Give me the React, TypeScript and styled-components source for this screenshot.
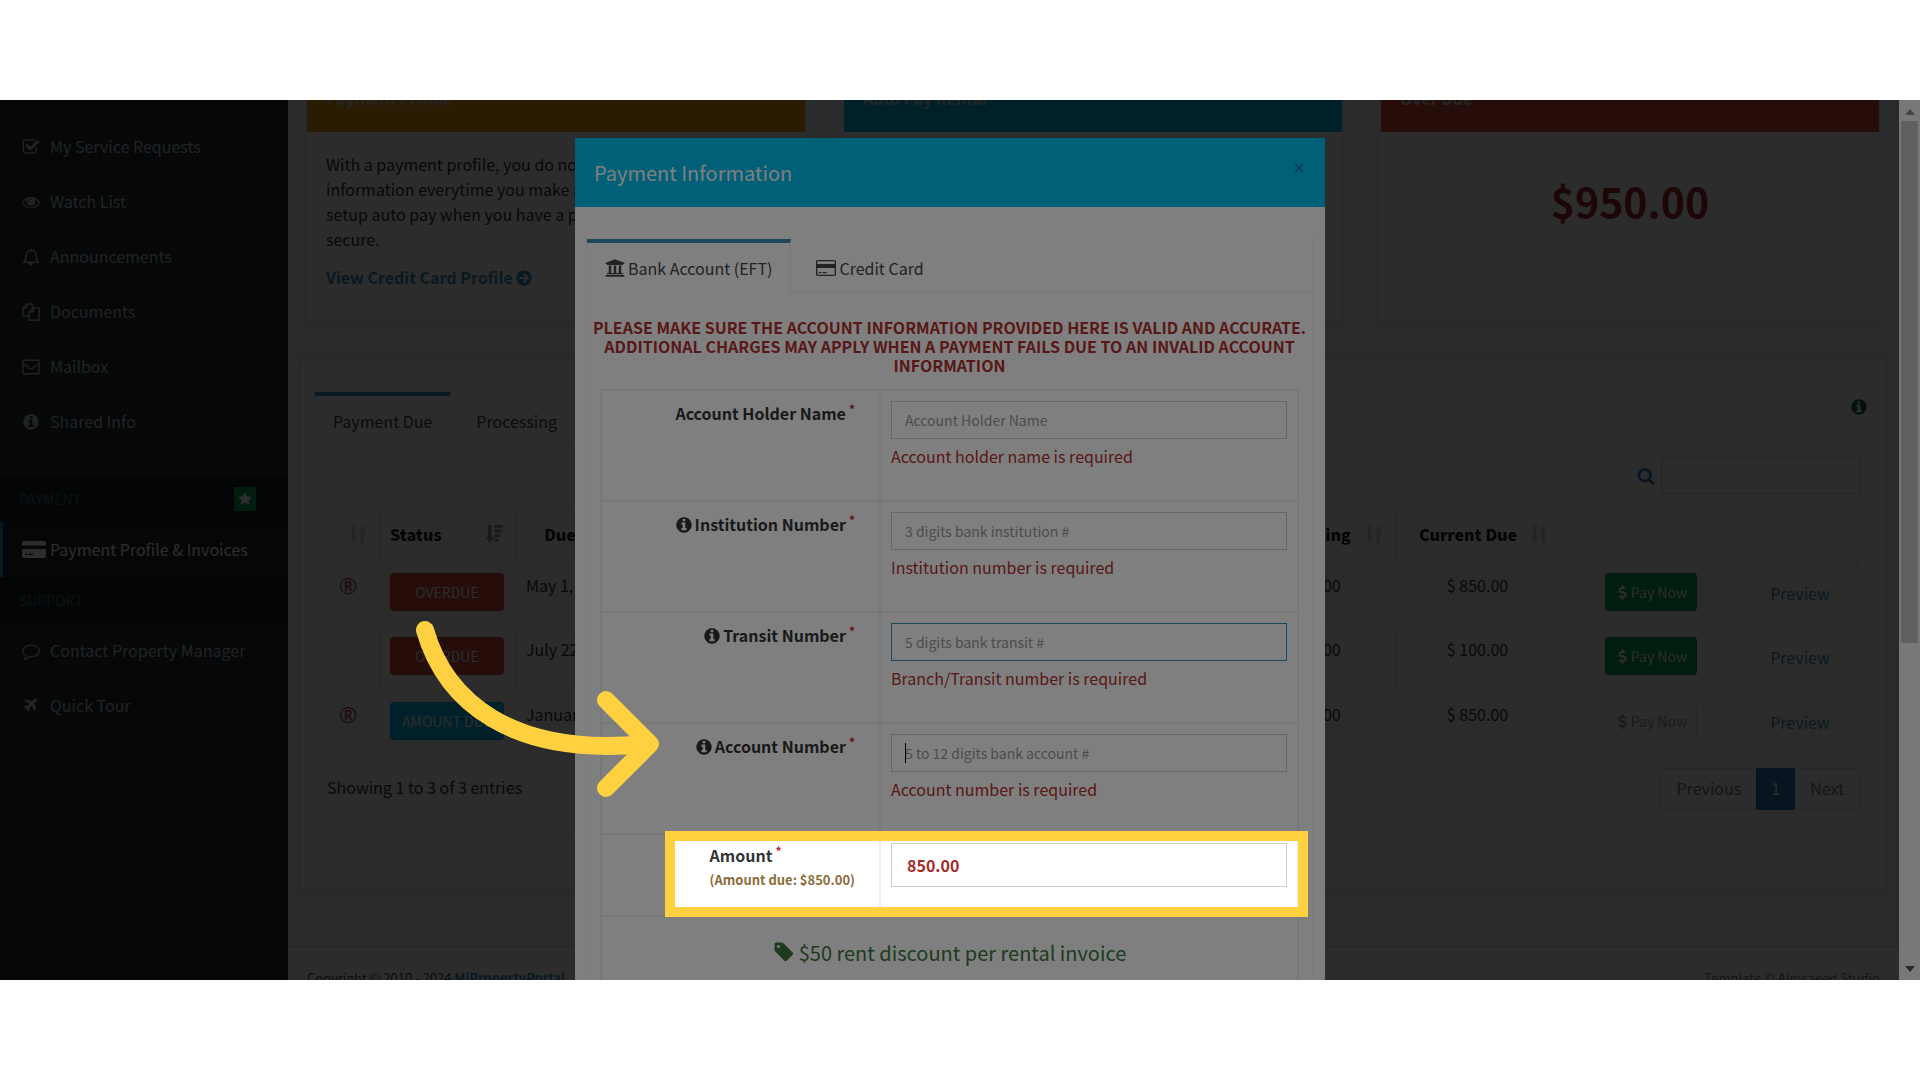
import React from "react";
import styled, { createGlobalStyle, css } from "styled-components";
import { FaArrowCircleRight, FaUniversity, FaDollarSign } from "react-icons/fa";

const GlobalStyle = createGlobalStyle`
  *, *::before, *::after { box-sizing: border-box; }
  body {
    margin: 0;
    background: #fff;
    color: #333;
    font-family: "Noto Sans CJK SC", "Source Sans Pro", "Noto Sans", sans-serif;
    font-size: 16px;
    line-height: 25px;
  }
  button, input { font: inherit; color: inherit; }
  a { color: #3c8dbc; text-decoration: none; }
  ul { list-style: none; margin: 0; padding: 0; }
  p, h1, h2, h3 { margin: 0; }
`;

/* ---------- icons ---------- */

const Glyph = styled.svg<{ $size?: number }>`
  width: ${(p) => p.$size ?? 18}px;
  height: ${(p) => p.$size ?? 18}px;
  flex: none;
  fill: currentColor;
`;

const paths = {
  check:
    "M1472 930v318q0 119-84.5 203.5t-203.5 84.5h-832q-119 0-203.5-84.5t-84.5-203.5v-832q0-119 84.5-203.5t203.5-84.5h832q63 0 117 25 15 7 18 23 3 17-9 29l-49 49q-10 10-23 10-3 0-9-2-23-6-45-6h-832q-66 0-113 47t-47 113v832q0 66 47 113t113 47h832q66 0 113-47t47-113v-254q0-13 9-22l64-64q10-10 23-10 6 0 12 3 20 8 20 29zm231-489l-814 814q-24 24-57 24t-57-24l-430-430q-24-24-24-57t24-57l110-110q24-24 57-24t57 24l263 263 647-647q24-24 57-24t57 24l110 110q24 24 24 57t-24 57z",
  eye: "M1664 960q-152-236-381-353 61 104 61 225 0 185-131.5 316.5t-316.5 131.5-316.5-131.5-131.5-316.5q0-121 61-225-229 117-381 353 133 205 333.5 326.5t434.5 121.5 434.5-121.5 333.5-326.5zm-720-384q0-20-14-34t-34-14q-125 0-214.5 89.5t-89.5 214.5q0 20 14 34t34 14 34-14 14-34q0-86 61-147t147-61q20 0 34-14t14-34zm848 384q0 34-20 69-140 230-376.5 368.5t-499.5 138.5-499.5-139-376.5-368q-20-35-20-69t20-69q140-229 376.5-368t499.5-139 499.5 139 376.5 368q20 35 20 69z",
  info: "M1152 1376v-160q0-14-9-23t-23-9h-96v-512q0-14-9-23t-23-9h-320q-14 0-23 9t-9 23v160q0 14 9 23t23 9h96v320h-96q-14 0-23 9t-9 23v160q0 14 9 23t23 9h448q14 0 23-9t9-23zm-128-896v-160q0-14-9-23t-23-9h-192q-14 0-23 9t-9 23v160q0 14 9 23t23 9h192q14 0 23-9t9-23zm640 416q0 209-103 385.5t-279.5 279.5-385.5 103-385.5-103-279.5-279.5-103-385.5 103-385.5 279.5-279.5 385.5-103 385.5 103 279.5 279.5 103 385.5z",
  star: "M1728 647q0 22-26 48l-363 354 86 500q1 7 1 20 0 21-10.5 35.5t-30.5 14.5q-19 0-40-12l-449-236-449 236q-22 12-40 12-21 0-31.5-14.5t-10.5-35.5q0-6 2-20l86-500-364-354q-25-27-25-48 0-37 56-46l502-73 225-455q19-41 49-41t49 41l225 455 502 73q56 9 56 46z",
  search:
    "M1216 832q0-185-131.5-316.5t-316.5-131.5-316.5 131.5-131.5 316.5 131.5 316.5 316.5 131.5 316.5-131.5 131.5-316.5zm512 832q0 52-38 90t-90 38q-54 0-90-38l-343-342q-179 124-399 124-143 0-273.5-55.5t-225-150-150-225-55.5-273.5 55.5-273.5 150-225 225-150 273.5-55.5 273.5 55.5 225 150 150 225 55.5 273.5q0 220-124 399l343 343q37 37 37 90z",
  tag: "M576 448q0-53-37.5-90.5t-90.5-37.5-90.5 37.5-37.5 90.5 37.5 90.5 90.5 37.5 90.5-37.5 37.5-90.5zm1067 576q0 53-37 90l-491 492q-39 37-91 37-53 0-90-37l-715-716q-38-37-64.5-101t-26.5-117v-416q0-52 38-90t90-38h416q53 0 117 26.5t102 64.5l715 714q37 39 37 91z",
  plane:
    "M1568 160q44 52 12 148t-108 172l-161 161 160 696q5 19-12 33l-128 96q-7 6-19 6-4 0-7-1-15-3-21-16l-279-508-259 259 53 194q5 17-8 31l-96 96q-9 9-23 9h-2q-15-2-24-13l-189-252-252-189q-11-7-13-23-1-13 9-25l96-97q9-9 23-9 6 0 8 1l194 53 259-259-508-279q-14-8-17-24-2-16 9-27l128-128q14-13 30-8l665 159 160-160q76-76 172-108t148 12z",
  comment:
    "M896 384q-204 0-381.5 69.5t-282 187.5-104.5 255q0 112 71.5 213.5t201.5 175.5l87 50-27 96q-24 91-70 172 152-63 275-171l43-38 57 6q69 8 130 8 204 0 381.5-69.5t282-187.5 104.5-255-104.5-255-282-187.5-381.5-69.5zm896 512q0 174-120 321.5t-326 233-450 85.5q-70 0-145-8-198 175-460 242-49 14-114 22h-5q-15 0-27-10.5t-16-27.5v-1q-3-4-.5-12t2-10 4.5-9.5l6-9 7-8.5 8-9q7-8 31-34.5t34.5-38 31-39.5 32.5-51 27-59 26-76q-157-89-247.5-220t-90.5-281q0-174 120-321.5t326-233 450-85.5 450 85.5 326 233 120 321.5z",
};

type SolidName = keyof typeof paths;

const Solid = ({ name, size }: { name: SolidName; size?: number }) => (
  <Glyph $size={size} viewBox="0 0 1792 1792" aria-hidden="true">
    <path d={paths[name]} />
  </Glyph>
);

const LineGlyph = styled(Glyph)`
  fill: none;
  stroke: currentColor;
  stroke-width: 1.4;
  stroke-linejoin: round;
`;

const BellIcon = () => (
  <LineGlyph viewBox="0 0 18 18" aria-hidden="true">
    <path d="M9 1v1.5M1.5 14.2c1.8-1.6 2.6-3.4 2.6-7.2 0-2.600 2.200-4.500 4.900-4.500s4.900 1.900 4.900 4.500c0 3.800.8 5.600 2.600 7.200z" />
    <path d="M7.300 15.100c0 1 .8 1.700 1.700 1.700s1.700-.7 1.700-1.700z" fill="currentColor" />
  </LineGlyph>
);

const FilesIcon = () => (
  <LineGlyph viewBox="0 0 18 18" aria-hidden="true">
    <path d="M7 13H.8V5.200L5 1h5.200v3.600M5 1v4.200H.8" />
    <path d="M7.200 8.800l4.200-4.200h5.800v12.600h-10zM11.400 4.600v4.200H7.200" />
  </LineGlyph>
);

const EnvelopeIcon = () => (
  <LineGlyph viewBox="0 0 18 18" aria-hidden="true">
    <rect x="0.8" y="2.300" width="16.400" height="13.400" rx="1.200" />
    <path d="M1 5.200l6.400 5.100q1.600 1.200 3.200 0L17 5.200" />
  </LineGlyph>
);

const WideGlyph = styled.svg`
  width: 24px;
  height: 17px;
  flex: none;
  fill: currentColor;
`;

const SolidCardIcon = () => (
  <WideGlyph viewBox="0 0 24 17" aria-hidden="true">
    <path d="M1.500 0h21Q24 0 24 1.500V4.500H0V1.500Q0 0 1.500 0z" />
    <path
      fillRule="evenodd"
      d="M0 8h24v7.500q0 1.500-1.500 1.500h-21Q0 17 0 15.500zM3 12.500v1.400h2.500v-1.400zM7 12.500v1.400h4v-1.400z"
    />
  </WideGlyph>
);

const OutlineCardIcon = () => (
  <Glyph $size={20} viewBox="0 0 1920 1792" aria-hidden="true">
    <path d="M1760 128q66 0 113 47t47 113v1216q0 66-47 113t-113 47h-1600q-66 0-113-47t-47-113v-1216q0-66 47-113t113-47h1600zm-1600 128q-13 0-22.500 9.500t-9.500 22.500v224h1664v-224q0-13-9.500-22.500t-22.500-9.500h-1600zm1600 1280q13 0 22.500-9.500t9.500-22.500v-608h-1664v608q0 13 9.500 22.500t22.500 9.500h1600zm-1504-128v-128h256v128h-256zm384 0v-128h384v128h-384z" />
  </Glyph>
);

const SortIcon = () => (
  <Glyph viewBox="0 0 18 18" aria-hidden="true">
    <path d="M3 0h3.500v12H9l-4.200 6L.5 12H3zM11.500 18H15V6h2.500L13.300 0 9 6h2.500z" />
  </Glyph>
);

const SortDescIcon = () => (
  <Glyph viewBox="0 0 18 18" aria-hidden="true">
    <path d="M3 0h3.500v12H9l-4.200 6L.5 12H3zM9.500 0H18v3H9.500zM9.500 4.500h7v3h-7zM9.500 9H15v3H9.500zM9.500 13.500h4v3h-4z" />
  </Glyph>
);

/* ---------- page frame ---------- */

const Page = styled.div`
  height: 100vh;
  padding: 100px 0;
  background: #fff;
`;

const Screen = styled.div`
  position: relative;
  display: flex;
  height: 100%;
  overflow: hidden;
`;

/* ---------- sidebar ---------- */

const Sidebar = styled.nav`
  width: 288px;
  flex: none;
  padding-top: 19px;
  background: #222d32;
`;

const NavLink = styled.a<{ $active?: boolean }>`
  display: flex;
  align-items: center;
  height: 55px;
  padding-left: 19px;
  border-left: 3px solid transparent;
  color: #b8c7ce;
  white-space: nowrap;
  ${(p) =>
    p.$active &&
    css`
      background: #1e282c;
      border-left-color: #3c8dbc;
      color: #fff;
    `}
`;

const NavIcon = styled.span`
  display: flex;
  width: 28px;
  flex: none;
`;

const NavHeading = styled.h2<{ $spaced?: boolean }>`
  display: flex;
  align-items: center;
  justify-content: space-between;
  height: 46px;
  margin-top: ${(p) => (p.$spaced ? 27 : 0)}px;
  padding: 0 32px 0 19px;
  background: #1a2226;
  color: #4b646f;
  font-size: 14px;
  font-weight: 400;
`;

const Badge = styled.span`
  display: flex;
  align-items: center;
  justify-content: center;
  width: 22px;
  height: 24px;
  background: #00a65a;
  color: #fff;
`;

/* ---------- content ---------- */

const Content = styled.div`
  flex: 1;
  min-width: 0;
  display: flex;
  flex-direction: column;
  background: #ecf0f5;
`;

/* The dashboard is scrolled a little, so the card headings start above the frame. */
const CardRow = styled.section`
  display: grid;
  grid-template-columns: repeat(3, 1fr);
  gap: 39px;
  margin-top: -16px;
  padding: 0 20px 0 19px;
`;

const Card = styled.article`
  display: flex;
  flex-direction: column;
  height: 237px;
  background: #fff;
  border-radius: 4px;
  box-shadow: 0 1px 1px rgba(0, 0, 0, 0.1);
`;

const CardHead = styled.h2<{ $color: string }>`
  height: 48px;
  padding: 2px 0 0 19px;
  background: ${(p) => p.$color};
  color: #d2d6de;
  font-size: 16px;
  font-weight: 700;
`;

const CardBody = styled.div`
  display: flex;
  flex-direction: column;
  align-items: flex-start;
  gap: 13px;
  padding: 20px 19px;
`;

const ProfileLink = styled.a`
  display: flex;
  align-items: center;
  gap: 3px;
  font-weight: 700;
`;

const Total = styled.strong`
  padding-top: 38px;
  color: #a7262a;
  font-size: 41px;
  line-height: 60px;
  text-align: center;
`;

const Panel = styled.section`
  flex: none;
  height: 529px;
  margin: 39px 14px 0 13px;
  padding: 32px 12px 0 13px;
  background: #fff;
  border-radius: 4px;
  box-shadow: 0 0 1px 1px rgba(0, 0, 0, 0.08);
`;

const TabBox = styled.div`
  border: 1px solid #f4f4f4;
  border-top: 0;
`;

const TabBar = styled.div`
  display: flex;
  align-items: stretch;
  height: 54px;
  box-shadow: inset 0 -1px 0 #ececec;
`;

const Tab = styled.button<{ $active?: boolean }>`
  display: flex;
  align-items: center;
  gap: 3px;
  padding: 0 18px;
  margin-right: 7px;
  border: 0;
  border-top: 4px solid ${(p) => (p.$active ? "#3c8dbc" : "transparent")};
  border-right: 1px solid ${(p) => (p.$active ? "#ececec" : "transparent")};
  background: ${(p) => (p.$active ? "#fff" : "transparent")};
  color: #444;
  white-space: nowrap;
`;

const TabInfo = styled.span`
  display: flex;
  margin-left: auto;
  padding: 6px 4px 0 0;
  color: #1d6b35;
`;

const TabBody = styled.div`
  padding: 11px 12px 0;
  height: 387px;
`;

const SearchRow = styled.label`
  display: flex;
  align-items: center;
  justify-content: flex-end;
  gap: 6px;
  margin-bottom: 15px;
  color: #337ab7;
`;

const SearchBox = styled.input`
  width: 199px;
  height: 37px;
  border: 1px solid #d2d6de;
  background: #fff;
`;

const Grid = styled.table`
  width: 100%;
  table-layout: fixed;
  border-collapse: collapse;
  border: 2px solid #f0f0f0;
  tbody tr:nth-child(odd) {
    background: #f9f9f9;
  }
`;

const Th = styled.th`
  height: 52px;
  padding: 0 12px 3px 9px;
  border: 2px solid #f0f0f0;
  border-bottom-width: 4px;
`;

const ThInner = styled.span<{ $center?: boolean; $muted?: boolean }>`
  display: flex;
  align-items: center;
  justify-content: space-between;
  color: #222;
  svg {
    color: ${(p) => (p.$muted ? "#d6d6d6" : "#999")};
  }
  b {
    flex: 1;
    text-align: ${(p) => (p.$center ? "center" : "left")};
  }
`;

const Td = styled.td<{ $center?: boolean; $middle?: boolean }>`
  height: 65px;
  padding: ${(p) => (p.$middle ? "9px 11px 13px 9px" : "9px 11px 9px 9px")};
  border: 2px solid #f0f0f0;
  vertical-align: ${(p) => (p.$middle ? "middle" : "top")};
  text-align: ${(p) => (p.$center ? "center" : "left")};
  white-space: nowrap;
`;

const Recurring = styled.span`
  padding-left: 1px;
  color: #b03030;
  font-family: "Open Sans", sans-serif;
  font-size: 22px;
`;

const Button = styled.button<{ $tone: "red" | "aqua" | "green" | "plain"; $wide?: boolean }>`
  display: inline-flex;
  align-items: center;
  justify-content: center;
  gap: 1px;
  width: ${(p) => (p.$wide ? "100%" : "92px")};
  height: 38px;
  padding: 0;
  border: 1px solid rgba(0, 0, 0, 0.1);
  border-radius: 4px;
  background: ${(p) => ({ red: "#dd4b39", aqua: "#00c0ef", green: "#00a65a", plain: "#fbfbfb" })[p.$tone]};
  color: ${(p) => (p.$tone === "plain" ? "#999" : "#fff")};
  font-size: 14px;
`;

const GridFoot = styled.div`
  display: flex;
  justify-content: space-between;
  height: 42px;
  margin-top: 10px;
  line-height: 38px;
`;

const Pager = styled.div`
  display: flex;
  height: 42px;
  border: 1px solid #ddd;
  border-radius: 4px;
`;

const PageButton = styled.button<{ $current?: boolean }>`
  padding: 0 15px 2px;
  margin: -1px 0;
  border: 0;
  background: ${(p) => (p.$current ? "#337ab7" : "transparent")};
  color: ${(p) => (p.$current ? "#fff" : "#777")};
`;

const Footer = styled.footer`
  display: flex;
  justify-content: space-between;
  flex: none;
  height: 70px;
  margin-top: 57px;
  padding: 18px 19px 0;
  border-top: 1px solid #d2d6de;
  background: #fff;
  color: #444;
  font-size: 13px;
`;

const FooterNote = styled.span`
  color: #777;
`;

/* ---------- scrollbar ---------- */

const Scrollbar = styled.div`
  display: flex;
  flex-direction: column;
  align-items: center;
  width: 21px;
  flex: none;
  padding: 9px 0 8px;
  background: #f1f1f1;
`;

const Thumb = styled.div`
  width: 17px;
  height: 60.5%;
  margin: 6px 0 auto;
  background: #c1c1c1;
`;

const ScrollArrow = styled.span<{ $down?: boolean }>`
  border: 5px solid transparent;
  border-top-width: ${(p) => (p.$down ? 6 : 0)}px;
  border-bottom-width: ${(p) => (p.$down ? 0 : 6)}px;
  border-${(p) => (p.$down ? "top" : "bottom")}-color: ${(p) => (p.$down ? "#505050" : "#8a8a8a")};
`;

/* ---------- dialog ---------- */

const Backdrop = styled.div`
  position: absolute;
  inset: 0 21px 0 0;
  background: rgba(0, 0, 0, 0.65);
`;

const DialogLayer = styled.div`
  position: absolute;
  inset: 0;
  display: flex;
  justify-content: center;
  align-items: flex-start;
  padding: 38px 20px 0 0;
`;

const Dialog = styled.div`
  position: relative;
  width: 750px;
  flex: none;
  background: #fff;
`;

const DialogHead = styled.header`
  display: flex;
  align-items: center;
  justify-content: space-between;
  height: 69px;
  padding: 0 20px 0 19px;
  background: #00c0ef;
  color: #fff;
`;

const DialogTitle = styled.h1`
  font-size: 20px;
  font-weight: 400;
`;

const CloseButton = styled.button`
  align-self: flex-start;
  padding: 17px 0 0;
  border: 0;
  background: none;
  color: #007a99;
  font-family: "Open Sans", sans-serif;
  font-size: 20px;
  line-height: 25px;
`;

const DialogBody = styled.div`
  padding: 32px 12px 0 11px;
`;

const FormPane = styled.form`
  padding: 25px 13px 0;
`;

const Warning = styled.p`
  margin: 0 -10px 14px;
  color: #b03030;
  font-weight: 700;
  line-height: 19px;
  text-align: center;
`;

const FormTable = styled.div`
  border: 2px solid #f0f0f0;
`;

const FormRow = styled.div<{ $short?: boolean }>`
  display: grid;
  grid-template-columns: 279px 1fr;
  height: ${(p) => (p.$short ? 82 : 111)}px;
  border-bottom: 2px solid #f0f0f0;
`;

const LabelCell = styled.div<{ $short?: boolean }>`
  display: flex;
  justify-content: flex-end;
  align-items: flex-start;
  padding: ${(p) => (p.$short ? 8 : 10)}px 24px 0 0;
  border-right: 2px solid #f0f0f0;
`;

const FieldLabel = styled.label`
  display: flex;
  align-items: center;
  gap: 2px;
  color: #333;
  font-weight: 700;
`;

const Star = styled.span`
  align-self: flex-start;
  margin-left: 1px;
  color: #c9202c;
  font-size: 12px;
  line-height: 16px;
`;

const AmountDue = styled.span`
  display: block;
  color: #8a6d3b;
  font-size: 13px;
  line-height: 23px;
`;

const FieldCell = styled.div<{ $short?: boolean }>`
  padding: ${(p) => (p.$short ? 8 : 10)}px 10px 0;
`;

const Field = styled.input<{ $focused?: boolean; $amount?: boolean }>`
  display: block;
  width: 100%;
  height: ${(p) => (p.$amount ? 44 : 38)}px;
  padding: 0 ${(p) => (p.$amount ? 15 : 13)}px;
  border: 1px solid ${(p) => (p.$focused ? "#3c8dbc" : "#c8ccd6")};
  border-radius: 0;
  background: #fff;
  color: #a52a2a;
  font-size: ${(p) => (p.$amount ? 16 : 14)}px;
  font-weight: ${(p) => (p.$amount ? 700 : 400)};
  &::placeholder {
    color: #999;
    opacity: 1;
  }
`;

const FieldWrap = styled.div`
  position: relative;
`;

const Caret = styled.span`
  position: absolute;
  left: 14px;
  top: 9px;
  width: 1px;
  height: 20px;
  background: #000;
`;

const FieldError = styled.p`
  margin-top: 5px;
  color: #b03030;
`;

const Discount = styled.p`
  display: flex;
  align-items: center;
  justify-content: center;
  gap: 4px;
  height: 70px;
  color: #3c763d;
  font-size: 20px;
`;

/* The dimming outside the highlighted row is the shadow of this frame. */
const Spotlight = styled.div`
  position: absolute;
  left: 90px;
  top: 693px;
  width: 643px;
  height: 86px;
  border: 10px solid #ffd140;
  box-shadow: 0 0 0 2000px rgba(0, 0, 0, 0.5);
  pointer-events: none;
`;

const Arrow = styled.svg`
  position: absolute;
  left: -165px;
  top: 473px;
  width: 260px;
  height: 200px;
  fill: none;
  stroke: #ffd140;
  stroke-width: 18;
  stroke-linecap: round;
  stroke-linejoin: round;
  pointer-events: none;
`;

/* ---------- data ---------- */

const navItems = [
  { label: "My Service Requests", icon: <Solid name="check" /> },
  { label: "Watch List", icon: <Solid name="eye" /> },
  { label: "Announcements", icon: <BellIcon /> },
  { label: "Documents", icon: <FilesIcon /> },
  { label: "Mailbox", icon: <EnvelopeIcon /> },
  { label: "Shared Info", icon: <Solid name="info" /> },
];

const supportItems = [
  { label: "Contact Property Manager", icon: <Solid name="comment" /> },
  { label: "Quick Tour", icon: <Solid name="plane" size={17} /> },
];

type Invoice = { recurring: boolean; status: string; tone: "red" | "aqua"; date: string; amount: string; payable: boolean };

const invoices: Invoice[] = [
  { recurring: true, status: "OVERDUE", tone: "red", date: "May 1, 2024", amount: "$ 850.00", payable: true },
  { recurring: false, status: "OVERDUE", tone: "red", date: "July 22, 2024", amount: "$ 100.00", payable: true },
  { recurring: true, status: "AMOUNT DUE", tone: "aqua", date: "January 1, 2025", amount: "$ 850.00", payable: false },
];

const fields = [
  { id: "holder", label: "Account Holder Name", hint: "Account Holder Name", error: "Account holder name is required" },
  { id: "institution", label: "Institution Number", hint: "3 digits bank institution #", error: "Institution number is required", info: true },
  { id: "transit", label: "Transit Number", hint: "5 digits bank transit #", error: "Branch/Transit number is required", info: true, focused: true },
  { id: "account", label: "Account Number", hint: "5 to 12 digits bank account #", error: "Account number is required", info: true, caret: true },
];

/* ---------- parts ---------- */

const NavItem = ({ label, icon, active }: { label: string; icon: React.ReactNode; active?: boolean }) => (
  <li>
    <NavLink href="#" $active={active}>
      <NavIcon>{icon}</NavIcon>
      {label}
    </NavLink>
  </li>
);

const SideNav = () => (
  <Sidebar>
    <ul>
      {navItems.map((item) => (
        <NavItem key={item.label} {...item} />
      ))}
    </ul>
    <NavHeading $spaced>
      PAYMENT
      <Badge>
        <Solid name="star" size={14} />
      </Badge>
    </NavHeading>
    <ul>
      <NavItem label="Payment Profile &amp; Invoices" icon={<SolidCardIcon />} active />
    </ul>
    <NavHeading>SUPPORT</NavHeading>
    <ul>
      {supportItems.map((item) => (
        <NavItem key={item.label} {...item} />
      ))}
    </ul>
  </Sidebar>
);

const InvoiceTable = () => (
  <Grid>
    <colgroup>
      <col style={{ width: 52 }} />
      <col style={{ width: 136 }} />
      <col style={{ width: 150 }} />
      <col />
      <col style={{ width: 170 }} />
      <col style={{ width: 165 }} />
      <col style={{ width: 182 }} />
      <col style={{ width: 116 }} />
    </colgroup>
    <thead>
      <tr>
        <Th>
          <ThInner $muted>
            <b />
            <SortIcon />
          </ThInner>
        </Th>
        <Th>
          <ThInner>
            <b>Status</b>
            <SortDescIcon />
          </ThInner>
        </Th>
        <Th>
          <ThInner $center $muted>
            <b>Due Date</b>
            <SortIcon />
          </ThInner>
        </Th>
        <Th />
        <Th>
          <ThInner $center $muted>
            <b>Outstanding</b>
            <SortIcon />
          </ThInner>
        </Th>
        <Th>
          <ThInner $center $muted>
            <b>Current Due</b>
            <SortIcon />
          </ThInner>
        </Th>
        <Th />
        <Th />
      </tr>
    </thead>
    <tbody>
      {invoices.map((row) => (
        <tr key={row.date}>
          <Td>{row.recurring && <Recurring>®</Recurring>}</Td>
          <Td>
            <Button $tone={row.tone} $wide>
              {row.status}
            </Button>
          </Td>
          <Td>{row.date}</Td>
          <Td />
          <Td $center>{row.amount}</Td>
          <Td $center>{row.amount}</Td>
          <Td $center>
            <Button $tone={row.payable ? "green" : "plain"} disabled={!row.payable}>
              <FaDollarSign size={15} />
              Pay Now
            </Button>
          </Td>
          <Td $center $middle>
            <a href="#">Preview</a>
          </Td>
        </tr>
      ))}
    </tbody>
  </Grid>
);

const Dashboard = () => (
  <Content>
    <CardRow>
      <Card>
        <CardHead $color="#f39c12">Payment Profile</CardHead>
        <CardBody>
          <p>
            With a payment profile, you do not need to enter card
            <br />
            information everytime you make a payment. You can
            <br />
            setup auto pay when you have a payment profile. It is
            <br />
            secure.
          </p>
          <ProfileLink href="#">
            View Credit Card Profile <FaArrowCircleRight size={16} />
          </ProfileLink>
        </CardBody>
      </Card>
      <Card>
        <CardHead $color="#00c0ef">Auto Pay Rental</CardHead>
      </Card>
      <Card>
        <CardHead $color="#dd4b39">Over Due</CardHead>
        <Total>$950.00</Total>
      </Card>
    </CardRow>
    <Panel>
      <TabBox>
        <TabBar>
          <Tab $active>Payment Due</Tab>
          <Tab>Processing</Tab>
          <TabInfo>
            <Solid name="info" />
          </TabInfo>
        </TabBar>
        <TabBody>
          <SearchRow aria-label="Search">
            <Solid name="search" />
            <SearchBox type="text" />
          </SearchRow>
          <InvoiceTable />
          <GridFoot>
            <span>Showing 1 to 3 of 3 entries</span>
            <Pager>
              <PageButton>Previous</PageButton>
              <PageButton $current>1</PageButton>
              <PageButton>Next</PageButton>
            </Pager>
          </GridFoot>
        </TabBody>
      </TabBox>
    </Panel>
    <Footer>
      <span>
        Copyright © 2010 - 2024{" "}
        <a href="#">
          <b>MiPropertyPortal</b>
        </a>
      </span>
      <FooterNote>Template © Almsaeed Studio</FooterNote>
    </Footer>
  </Content>
);

const PaymentDialog = () => (
  <Dialog role="dialog" aria-label="Payment Information">
    <DialogHead>
      <DialogTitle>Payment Information</DialogTitle>
      <CloseButton aria-label="Close">×</CloseButton>
    </DialogHead>
    <DialogBody>
      <TabBox>
        <TabBar>
          <Tab $active>
            <FaUniversity size={20} />
            Bank Account (EFT)
          </Tab>
          <Tab>
            <OutlineCardIcon />
            Credit Card
          </Tab>
        </TabBar>
        <FormPane>
          <Warning>
            PLEASE MAKE SURE THE ACCOUNT INFORMATION PROVIDED HERE IS VALID AND ACCURATE. ADDITIONAL CHARGES MAY APPLY
            WHEN A PAYMENT FAILS DUE TO AN INVALID ACCOUNT INFORMATION
          </Warning>
          <FormTable>
            {fields.map((f) => (
              <FormRow key={f.id}>
                <LabelCell>
                  <FieldLabel htmlFor={f.id}>
                    {f.info && <Solid name="info" />}
                    {f.label}
                    <Star>*</Star>
                  </FieldLabel>
                </LabelCell>
                <FieldCell>
                  <FieldWrap>
                    <Field id={f.id} type="text" placeholder={f.hint} $focused={f.focused} />
                    {f.caret && <Caret />}
                  </FieldWrap>
                  <FieldError>{f.error}</FieldError>
                </FieldCell>
              </FormRow>
            ))}
            <FormRow $short>
              <LabelCell $short>
                <div>
                  <FieldLabel htmlFor="amount">
                    Amount
                    <Star>*</Star>
                  </FieldLabel>
                  <AmountDue>
                    <b>(Amount due: $850.00)</b>
                  </AmountDue>
                </div>
              </LabelCell>
              <FieldCell $short>
                <Field id="amount" type="text" defaultValue="850.00" $amount />
              </FieldCell>
            </FormRow>
            <Discount>
              <Solid name="tag" size={22} />
              $50 rent discount per rental invoice
            </Discount>
          </FormTable>
        </FormPane>
      </TabBox>
    </DialogBody>
    <Spotlight />
    <Arrow viewBox="410 611 260 200" aria-hidden="true">
      <path d="M425 630C445 700 510 757 645 744M606 700L650 744L606 788" />
    </Arrow>
  </Dialog>
);

export default function App() {
  return (
    <>
      <GlobalStyle />
      <Page>
        <Screen>
          <SideNav />
          <Dashboard />
          <Scrollbar aria-hidden="true">
            <ScrollArrow />
            <Thumb />
            <ScrollArrow $down />
          </Scrollbar>
          <Backdrop />
          <DialogLayer>
            <PaymentDialog />
          </DialogLayer>
        </Screen>
      </Page>
    </>
  );
}
